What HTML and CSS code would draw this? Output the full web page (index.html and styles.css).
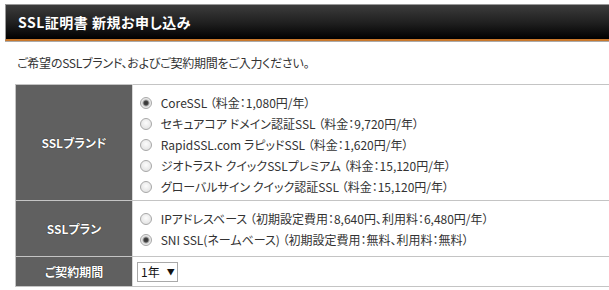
FILE: index.html
```html
<!DOCTYPE html>
<html lang="ja">
<head>
  <meta charset="UTF-8" />
  <link rel="stylesheet" href="styles.css">
  <title>SSL証明書 新規お申し込み</title>
</head>
<body>
  <div class="page">
    <h1 class="title-bar">SSL証明書 新規お申し込み</h1>

    <p class="lead">ご希望のSSLブランド、およびご契約期間をご入力ください。</p>

    <table class="form-table">
      <tr>
        <th>SSLブランド</th>
        <td class="brand-cell">
          <label><input type="radio" name="brand" checked> CoreSSL （料金：1,080円/年）</label>
          <label><input type="radio" name="brand"> セキュアコア ドメイン認証SSL （料金：9,720円/年）</label>
          <label><input type="radio" name="brand"> RapidSSL.com ラピッドSSL （料金：1,620円/年）</label>
          <label><input type="radio" name="brand"> ジオトラスト クイックSSLプレミアム （料金：15,120円/年）</label>
          <label><input type="radio" name="brand"> グローバルサイン クイック認証SSL （料金：15,120円/年）</label>
        </td>
      </tr>
      <tr>
        <th>SSLプラン</th>
        <td class="plan-cell">
          <label><input type="radio" name="plan"> IPアドレスベース （初期設定費用：8,640円、利用料：6,480円/年）</label>
          <label><input type="radio" name="plan" checked> SNI SSL(ネームベース) （初期設定費用：無料、利用料：無料）</label>
        </td>
      </tr>
      <tr>
        <th>ご契約期間</th>
        <td class="term-cell">
          <span class="select-box">1年 <span class="arrow">▼</span></span>
        </td>
      </tr>
    </table>
  </div>
</body>
</html>
```

FILE: styles.css
```css
html, body {
  margin: 0;
  padding: 0;
  overflow: hidden;
  background: #fff;
}
body {
  font-family: "Noto Sans CJK JP", "Liberation Sans", sans-serif;
  font-size: 12px;
  color: #333;
  font-feature-settings: "palt";
}
.page {
  width: 620px;
  padding: 4px 0 0 5px;
}
.title-bar {
  margin: 0;
  height: 34px;
  line-height: 34px;
  padding-left: 12px;
  font-size: 14px;
  font-weight: bold;
  letter-spacing: 0.5px;
  color: #fff;
  background: linear-gradient(#3c3c3c, #1e1e1e 55%, #000);
  border-top: 1px solid #999;
  border-left: 1px solid #999;
  border-bottom: 2px solid #c9782b;
  box-shadow: 0 1px 0 #aaa;
}
.lead {
  margin: 12px 0 0 12px;
  line-height: 20px;
  letter-spacing: -0.25px;
}
.form-table {
  margin: 11px 0 0 10px;
  width: 600px;
  border-collapse: collapse;
  border-top: 1px solid #c4c4c4;
}
.form-table th {
  width: 116px;
  background: #606060;
  color: #fff;
  font-weight: bold;
  text-align: center;
  border-bottom: 1px solid #c4c4c4;
  border-left: 1px solid #c4c4c4;
  border-right: 1px solid #d8d8d8;
  text-shadow: 0 0 1px #000;
  padding: 0;
}
.form-table td {
  border-bottom: 1px solid #c4c4c4;
  padding: 0 0 0 6px;
  vertical-align: top;
}
.form-table label {
  display: flex;
  align-items: center;
  height: 21px;
  white-space: pre;
}
.brand-cell {
  padding-top: 7px !important;
  height: 108px;
}
.plan-cell {
  padding-top: 7px !important;
  height: 48px;
}
.term-cell {
  height: 29px;
  vertical-align: middle !important;
  padding-left: 4px !important;
}
input[type="radio"] {
  appearance: none;
  width: 12px;
  height: 12px;
  margin: 0 6px 0 1px;
  border: 1px solid #a8a8a8;
  border-radius: 50%;
  background: radial-gradient(circle at 50% 40%, #fcfcfc, #dcdcdc);
}
input[type="radio"]:checked {
  background: radial-gradient(circle, #333 0, #444 2px, #aaa 3px, #e6e6e6 4px, #f4f4f4);
}
.select-box {
  display: inline-flex;
  align-items: center;
  height: 20px;
  width: 41px;
  box-sizing: border-box;
  padding-left: 3px;
  border: 1px solid #a9a9a9;
  background: #fff;
  color: #111;
}
.arrow {
  font-size: 8px;
  margin-left: 7px;
}
```
